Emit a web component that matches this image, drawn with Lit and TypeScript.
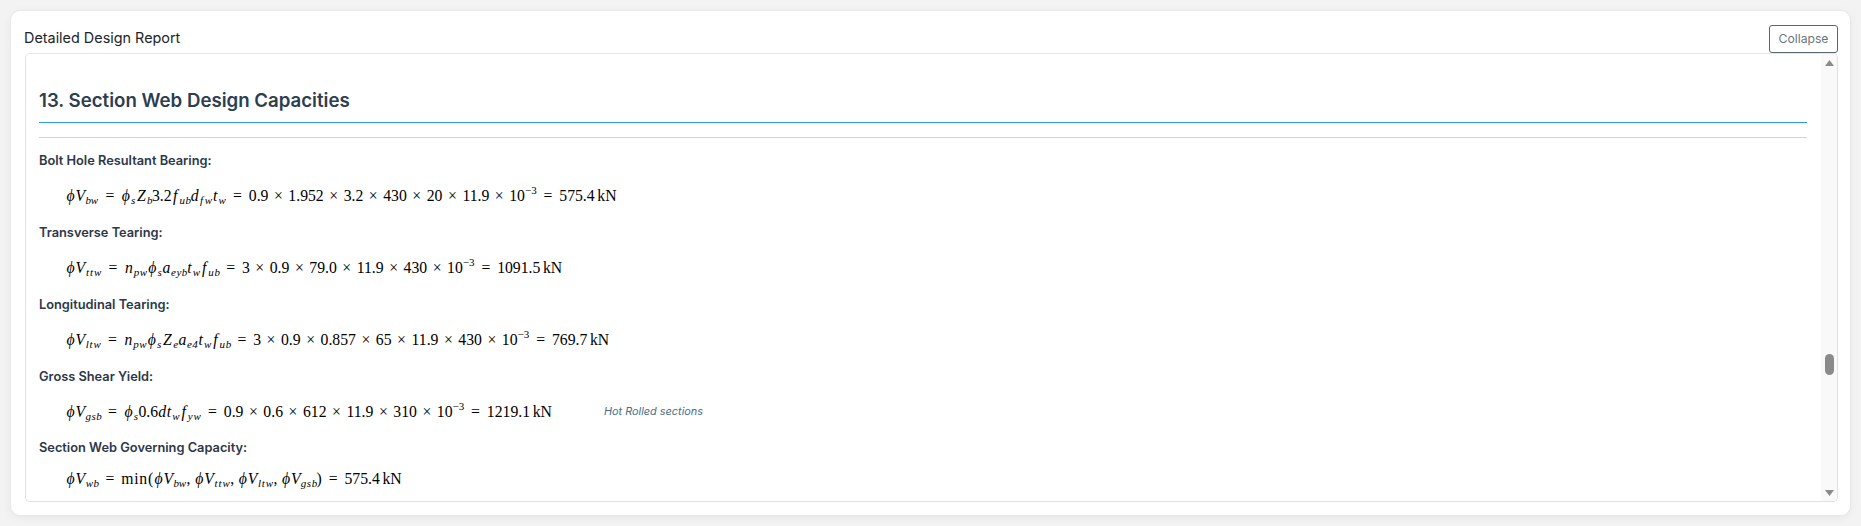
import { LitElement, html, css } from "lit";
import { customElement } from "lit/decorators.js";

type Row = { label: string; eq: string; note?: string; tight?: boolean };

const ROWS: Row[] = [
  { label: "Bolt Hole Resultant Bearing:", eq: "i:ϕV _bw = i:ϕ _s i:Z _b 3.2 i:f _ub i:d _fw i:t _w = 0.9 x 1.952 x 3.2 x 430 x 20 x 11.9 x 10 ^−3 = 575.4 u:kN" },
  { label: "Transverse Tearing:", eq: "i:ϕV _ttw = i:n _pw i:ϕ _s i:a _eyb i:t _w i:f _ub = 3 x 0.9 x 79.0 x 11.9 x 430 x 10 ^−3 = 1091.5 u:kN" },
  { label: "Longitudinal Tearing:", eq: "i:ϕV _ltw = i:n _pw i:ϕ _s i:Z _e i:a _e4 i:t _w i:f _ub = 3 x 0.9 x 0.857 x 65 x 11.9 x 430 x 10 ^−3 = 769.7 u:kN" },
  { label: "Gross Shear Yield:", eq: "i:ϕV _gsb = i:ϕ _s 0.6 i:dt _w i:f _yw = 0.9 x 0.6 x 612 x 11.9 x 310 x 10 ^−3 = 1219.1 u:kN", note: "Hot Rolled sections" },
  { label: "Section Web Governing Capacity:", eq: "i:ϕV _wb = f:min( i:ϕV _bw c i:ϕV _ttw c i:ϕV _ltw c i:ϕV _gsb ) = 575.4 u:kN", tight: true },
];

/* Advance widths (em) of the math-italic letters the reference was set in. */
const MAIN: Record<string, number> = { "ϕ": 0.596, V: 0.64, Z: 0.71, f: 0.47, d: 0.52, t: 0.35, n: 0.6, a: 0.529 };
const SUB: Record<string, number> = { b: 0.45, w: 0.74, u: 0.6, f: 0.52, d: 0.55, p: 0.52, e: 0.5, y: 0.52, s: 0.48, t: 0.37, l: 0.32, g: 0.5, "4": 0.53 };

function letters(text: string, table: Record<string, number>) {
  return [...text].map((c) => html`<span class="gl" style="width:${table[c] ?? 0.5}em">${c}</span>`);
}

function renderEq(eq: string) {
  return eq.split(" ").map((t) => {
    if (t === "x") return html`<span class="bin">×</span>`;
    if (t === "=") return html`<span class="rel">=</span>`;
    if (t === "c") return html`<span class="comma">,</span>`;
    if (t.startsWith("i:")) return html`<i class="var">${letters(t.slice(2), MAIN)}</i>`;
    if (t.startsWith("u:")) return html`<span class="unit">${t.slice(2)}</span>`;
    if (t.startsWith("f:")) return html`<span class="fn">${t.slice(2)}</span>`;
    if (t.startsWith("_")) return html`<i class="sub">${letters(t.slice(1), SUB)}</i>`;
    if (t.startsWith("^")) return html`<span class="sup">${t.slice(1)}</span>`;
    return html`<span>${t}</span>`;
  });
}

@customElement("app-root")
export class AppRoot extends LitElement {
  static styles = css`
    :host {
      display: block;
      height: 526px;
      box-sizing: border-box;
      padding: 10px;
      background: #f3f3f3;
      font-family: Inter, "Liberation Sans", sans-serif;
      overflow: hidden;
    }
    .card {
      box-sizing: border-box;
      height: 506px;
      background: #fff;
      border: 1px solid #e8e8e8;
      border-radius: 10px;
      box-shadow: 0 2px 8px rgba(0, 0, 0, 0.05);
      padding: 14px 12px 13px 14px;
      display: flex;
      flex-direction: column;
    }
    .head {
      display: flex;
      justify-content: space-between;
      align-items: center;
      height: 28px;
      flex: none;
    }
    .title {
      font-size: 14.4px;
      color: #212529;
      line-height: 24px;
      margin: 0 0 2px -1px;
    }
    .btn {
      box-sizing: border-box;
      width: 69px;
      height: 28px;
      border: 1px solid #5c6670;
      border-radius: 3px;
      background: #fff;
      color: #6c757d;
      font: 12.2px Inter, "Liberation Sans", sans-serif;
      padding: 0 0 2px;
    }
    .box {
      flex: 1;
      min-height: 0;
      display: flex;
      border: 1px solid #dee2e6;
      border-top-color: #e3e6ea;
      border-radius: 5px;
      overflow: hidden;
    }
    .content {
      flex: 1;
      min-width: 0;
      box-sizing: border-box;
      padding: 34px 14px 0 13px;
      overflow: hidden;
    }
    h2 {
      margin: 0;
      font-size: 18.65px;
      line-height: 24px;
      font-weight: 600;
      color: #2c3e50;
      padding-bottom: 10px;
      border-bottom: 1px solid #2e9be6;
    }
    hr {
      border: 0;
      border-top: 1px solid #ced4da;
      margin: 14px 0 0;
    }
    .label {
      font-size: 12.8px;
      font-weight: 600;
      line-height: 20px;
      color: #2d3748;
      margin-top: 17px;
    }
    .label.first {
      margin-top: 13px;
    }
    .label.last {
      margin-top: 16px;
    }
    .formula {
      display: flex;
      align-items: baseline;
      margin: 15px 0 0 27px;
      height: 20px;
      line-height: 20px;
      font-family: "Liberation Serif", "DejaVu Serif", serif;
      font-size: 15.73px;
      color: #000;
      white-space: nowrap;
    }
    .formula.tight {
      margin-top: 11px;
    }
    .gl {
      display: inline-block;
      text-align: center;
    }
    .var {
      font-style: italic;
    }
    .sub {
      font-size: 0.7em;
      font-style: italic;
      position: relative;
      top: 0.25em;
      line-height: 0;
    }
    .sup {
      font-size: 0.7em;
      position: relative;
      top: -0.6em;
      line-height: 0;
    }
    .bin {
      display: inline-block;
      width: 0.778em;
      margin: 0 0.245em;
      text-align: center;
    }
    .rel {
      display: inline-block;
      width: 0.778em;
      margin: 0 0.33em;
      text-align: center;
    }
    .comma {
      margin-right: 0.26em;
    }
    .unit {
      margin-left: 0.167em;
    }
    .fn {
      letter-spacing: 0.05em;
    }
    .note {
      font-family: Inter, "Liberation Sans", sans-serif;
      font-style: italic;
      font-size: 10.9px;
      color: #4a6c8c;
      margin-left: 52px;
      transform: translateY(-2px);
    }
    .track {
      flex: none;
      width: 16px;
      background: #f9f9f9;
      display: flex;
      flex-direction: column;
      align-items: center;
      padding: 6px 0 5px;
      box-sizing: border-box;
    }
    .thumb {
      width: 9px;
      height: 21px;
      border-radius: 5px;
      background: #8a8a8a;
      margin: 288px 0 auto;
    }
    .arrow {
      display: block;
      flex: none;
      fill: #8a8a8a;
    }
  `;

  render() {
    return html`
      <div class="card">
        <div class="head">
          <span class="title">Detailed Design Report</span>
          <button class="btn">Collapse</button>
        </div>
        <div class="box">
          <div class="content">
            <h2>13. Section Web Design Capacities</h2>
            <hr />
            ${ROWS.map(
              (r, i) => html`
                <div class="label ${i === 0 ? "first" : i === ROWS.length - 1 ? "last" : ""}">${r.label}</div>
                <div class="formula ${r.tight ? "tight" : ""}">
                  <span>${renderEq(r.eq)}</span>
                  ${r.note ? html`<span class="note">${r.note}</span>` : ""}
                </div>
              `
            )}
          </div>
          <div class="track">
            <svg class="arrow" width="9" height="6" viewBox="0 0 9 6"><polygon points="4.5,0 9,6 0,6"></polygon></svg>
            <div class="thumb"></div>
            <svg class="arrow" width="9" height="6" viewBox="0 0 9 6"><polygon points="0,0 9,0 4.5,6"></polygon></svg>
          </div>
        </div>
      </div>
    `;
  }
}
